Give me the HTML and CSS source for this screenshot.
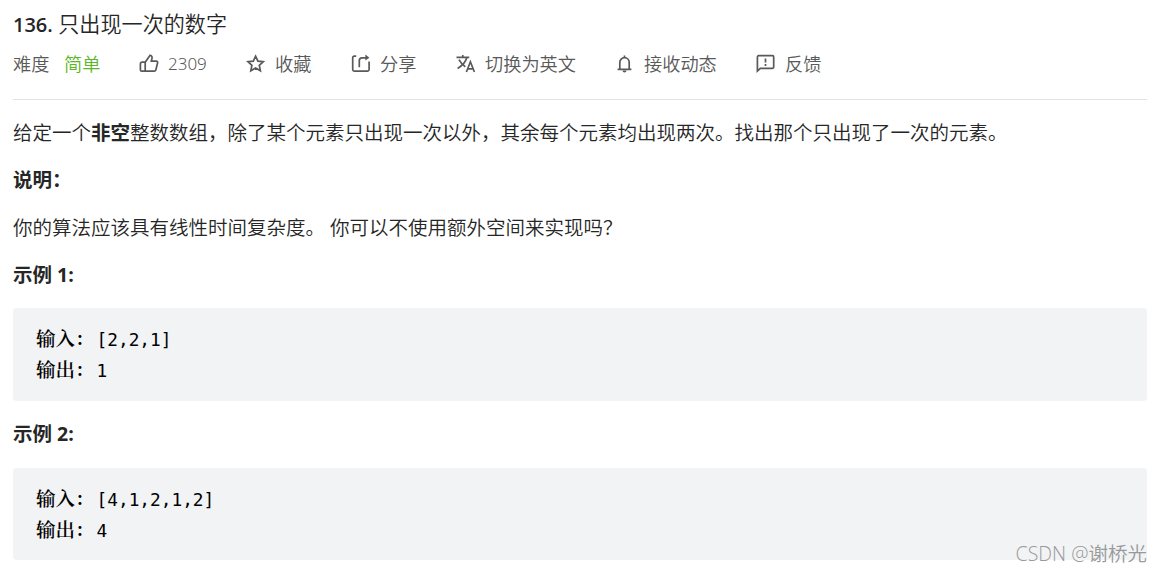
FILE: index.html
```html
<!DOCTYPE html>
<html lang="zh-CN">
<head>
  <meta charset="UTF-8" />
  <meta name="viewport" content="width=device-width, initial-scale=1" />
  <title>136. 只出现一次的数字</title>
  <link rel="stylesheet" href="styles.css">
</head>
<body>
  <div class="header">
    <h1 class="title"><span class="title-no">136.</span> 只出现一次的数字</h1>
    <div class="meta">
      <span class="label">难度</span>
      <span class="level">简单</span>
      <span class="item like">
        <svg class="icon" viewBox="0 0 20 20"><path d="M3 8.2h3.2v9H2.8a1.4 1.4 0 0 1-1.4-1.4V9.8A1.6 1.6 0 0 1 3 8.2zM6.2 8.2l4.9-6.9c1.6.4 2.3 1.6 1.9 3.1l-.7 2.7h5a1.3 1.3 0 0 1 1.3 1.6l-1.7 7c-.2.9-.9 1.5-1.8 1.5H6.2z" /></svg>
        <span class="count">2309</span>
      </span>
      <span class="item fav">
        <svg class="icon" viewBox="0 0 20 20"><path d="m9.6 2.2 2.3 4.9 5.4.6-4 3.7 1.1 5.4-4.8-2.7-4.8 2.7 1.1-5.4-4-3.7 5.4-.6z" /></svg>
        <span>收藏</span>
      </span>
      <span class="item share">
        <svg class="icon" viewBox="0 0 20 20"><path d="M5.2 2.2H3.3a1.6 1.6 0 0 0-1.6 1.6v11.8a1.6 1.6 0 0 0 1.6 1.6h13.2a1.6 1.6 0 0 0 1.6-1.6V7.4M8.3 13.3V6.6a2.8 2.8 0 0 1 2.8-2.8H16" /><path class="fill" d="m14.4.6 4 3.2-4 2.8z" /></svg>
        <span>分享</span>
      </span>
      <span class="item lang">
        <svg class="icon" viewBox="0 0 20 20"><path d="M.5 3.3h12.7M6.8 3.3V1M3 5.6c1.6 3.1 3.8 5.4 6.3 7.1M10.9 3.6C9.6 8.3 6 12 1.6 14.4" /><path d="m10.4 18 4-10.2 4 10.2M11.8 14.8h5.2" /></svg>
        <span>切换为英文</span>
      </span>
      <span class="item bell">
        <svg class="icon" viewBox="0 0 20 20"><path d="M2.6 15.3h13.8M4.8 15.1V8.4a4.7 4.7 0 0 1 9.4 0v6.7M9.5 3.6V1.4" /><path class="fill" d="M7.5 16.6h4a2 2 0 0 1-4 0z" /></svg>
        <span>接收动态</span>
      </span>
      <span class="item feedback">
        <svg class="icon" viewBox="0 0 20 20"><path d="M1.4 17V2.9a1.2 1.2 0 0 1 1.2-1.2h13.9a1.2 1.2 0 0 1 1.2 1.2v10.2a1.2 1.2 0 0 1-1.2 1.2H4.3zM9.5 4.4v4M9.5 10v2" /></svg>
        <span>反馈</span>
      </span>
    </div>
  </div>

  <div class="content">
    <p>给定一个<strong>非空</strong>整数数组，除了某个元素只出现一次以外，其余每个元素均出现两次。找出那个只出现了一次的元素。</p>
    <p><strong>说明：</strong></p>
    <p>你的算法应该具有线性时间复杂度。 你可以不使用额外空间来实现吗？</p>
    <p><strong>示例 1:</strong></p>
    <pre><b>输入：</b>[2,2,1]
<b>输出：</b>1</pre>
    <p><strong>示例 2:</strong></p>
    <pre><b>输入：</b>[4,1,2,1,2]
<b>输出：</b>4</pre>
  </div>

  <div class="watermark">CSDN @谢桥光</div>
</body>
</html>
```

FILE: styles.css
```css
* { box-sizing: border-box; }
body {
  margin: 0;
  padding: 7px 15px 0 13px;
  height: 573px;
  overflow: hidden;
  background: #fff;
  color: #262626;
  font-family: "Open Sans", "Noto Sans CJK SC", sans-serif;
  font-weight: 350;
}
.header {
  height: 93px;
  border-bottom: 1px solid #e3e3e3;
}
.title {
  margin: 0;
  font-size: 21.1px;
  line-height: 34px;
  font-weight: 350;
  white-space: nowrap;
}
.title-no {
  font-size: 20px;
  font-weight: 600;
}
.meta {
  display: flex;
  align-items: center;
  height: 44px;
  font-size: 18.2px;
  line-height: 28px;
  color: #595959;
  white-space: nowrap;
}
.label { width: 51px; }
.level { width: 75px; color: #5ab726; }
.item { display: flex; align-items: center; }
.like { width: 107px; }
.fav { width: 105px; }
.share { width: 105px; }
.lang { width: 159px; }
.bell { width: 141px; }
.icon {
  width: 20px;
  height: 20px;
  margin-right: 9px;
  fill: none;
  stroke: #595959;
  stroke-width: 1.7;
}
.icon .fill { fill: #595959; stroke: none; }
.count {
  font-family: "Noto Sans", sans-serif;
  font-size: 17px;
  font-weight: 350;
}
.content {
  font-size: 19.5px;
  line-height: 31px;
}
.content p {
  margin: 0 0 16.3px;
  white-space: nowrap;
}
.content p:first-child { margin-top: 17px; }
.content strong { font-weight: 700; }
.content pre {
  margin: 0 0 17.4px;
  padding: 16px 23px;
  height: 92.6px;
  border-radius: 4px;
  background: #f1f3f5;
  color: #000;
  font-family: "DejaVu Sans Mono", "Noto Sans CJK SC", monospace;
  font-size: 17.8px;
  font-weight: 400;
  line-height: 31px;
}
.content p + pre { margin-top: 18.5px; }
.content pre b {
  margin-right: 2px;
  font-family: "Noto Serif CJK SC", "Noto Sans CJK SC", sans-serif;
  font-size: 19.5px;
  font-weight: 600;
  line-height: 1;
}
/* sits over the corner of the last block */
.watermark {
  position: absolute;
  right: 15px;
  bottom: 5px;
  color: #999;
  font-size: 19.5px;
  line-height: 28px;
}
```
